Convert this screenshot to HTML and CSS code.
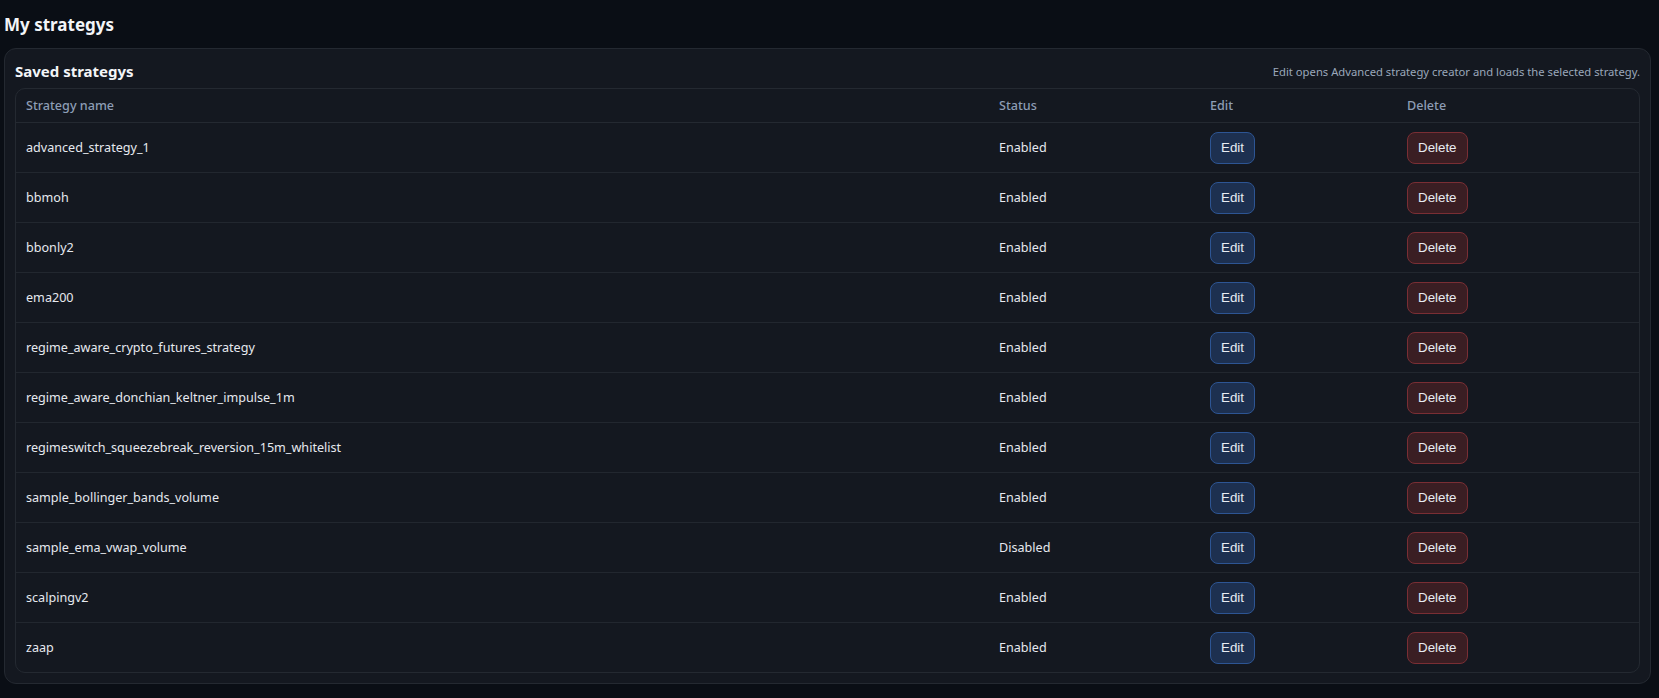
FILE: index.html
```html
<!DOCTYPE html>
<html lang="en">
<head>
<meta charset="utf-8">
<title>My strategys</title>
<link rel="stylesheet" href="styles.css">
</head>
<body>
<h1 class="page-title">My strategys</h1>
<section class="card">
  <div class="card-head">
    <h2 class="card-title">Saved strategys</h2>
    <span class="hint">Edit opens Advanced strategy creator and loads the selected strategy.</span>
  </div>
  <div class="table-wrap">
    <table class="strat-table">
      <colgroup>
        <col class="c-name"><col class="c-status"><col class="c-edit"><col class="c-del">
      </colgroup>
      <thead>
        <tr><th>Strategy name</th><th>Status</th><th>Edit</th><th>Delete</th></tr>
      </thead>
      <tbody>
        <tr><td>advanced_strategy_1</td><td>Enabled</td><td><button class="btn btn-edit">Edit</button></td><td><button class="btn btn-del">Delete</button></td></tr>
        <tr><td>bbmoh</td><td>Enabled</td><td><button class="btn btn-edit">Edit</button></td><td><button class="btn btn-del">Delete</button></td></tr>
        <tr><td>bbonly2</td><td>Enabled</td><td><button class="btn btn-edit">Edit</button></td><td><button class="btn btn-del">Delete</button></td></tr>
        <tr><td>ema200</td><td>Enabled</td><td><button class="btn btn-edit">Edit</button></td><td><button class="btn btn-del">Delete</button></td></tr>
        <tr><td>regime_aware_crypto_futures_strategy</td><td>Enabled</td><td><button class="btn btn-edit">Edit</button></td><td><button class="btn btn-del">Delete</button></td></tr>
        <tr><td>regime_aware_donchian_keltner_impulse_1m</td><td>Enabled</td><td><button class="btn btn-edit">Edit</button></td><td><button class="btn btn-del">Delete</button></td></tr>
        <tr><td>regimeswitch_squeezebreak_reversion_15m_whitelist</td><td>Enabled</td><td><button class="btn btn-edit">Edit</button></td><td><button class="btn btn-del">Delete</button></td></tr>
        <tr><td>sample_bollinger_bands_volume</td><td>Enabled</td><td><button class="btn btn-edit">Edit</button></td><td><button class="btn btn-del">Delete</button></td></tr>
        <tr><td>sample_ema_vwap_volume</td><td>Disabled</td><td><button class="btn btn-edit">Edit</button></td><td><button class="btn btn-del">Delete</button></td></tr>
        <tr><td>scalpingv2</td><td>Enabled</td><td><button class="btn btn-edit">Edit</button></td><td><button class="btn btn-del">Delete</button></td></tr>
        <tr><td>zaap</td><td>Enabled</td><td><button class="btn btn-edit">Edit</button></td><td><button class="btn btn-del">Delete</button></td></tr>
      </tbody>
    </table>
  </div>
</section>
</body>
</html>
```
FILE: styles.css
```css
* { box-sizing: border-box; }
html, body { background: #0a0e15; }
body {
  margin: 0;
  padding: 0 8px 0 4px;
  font-family: "Noto Sans", "Open Sans", sans-serif;
  color: #e6e9ef;
}
.page-title {
  margin: 0;
  padding: 13px 0 11px 0;
  font-size: 17px;
  line-height: 24px;
  font-weight: 700;
  color: #f3f5f8;
}
.card {
  background: #141820;
  border: 1px solid #242931;
  border-radius: 12px;
  padding: 10px;
}
.card-head {
  display: flex;
  justify-content: space-between;
  align-items: center;
  height: 24px;
  margin-bottom: 5px;
}
.card-title {
  margin: 0;
  font-size: 15px;
  line-height: 24px;
  font-weight: 700;
  color: #f3f5f8;
}
.hint {
  font-size: 11.25px;
  color: #9aa7ba;
}
.table-wrap {
  border: 1px solid #242931;
  border-radius: 10px;
  overflow: hidden;
}
.strat-table {
  width: 100%;
  border-collapse: collapse;
  table-layout: fixed;
  font-size: 12.6px;
}
.c-name { width: 973px; }
.c-status { width: 211px; }
.c-edit { width: 197px; }
.c-del { width: auto; }
.strat-table th {
  text-align: left;
  font-weight: 500;
  color: #8d9db5;
  height: 33px;
  padding: 0 10px;
  border-bottom: 1px solid #242931;
}
.strat-table td {
  height: 50px;
  padding: 1px 10px 0 10px;
  border-bottom: 1px solid #22272f;
  vertical-align: middle;
}
.strat-table tbody tr:last-child td { border-bottom: none; }
.btn {
  font-family: "Liberation Sans", Arial, sans-serif;
  font-size: 13.33px;
  height: 32px;
  padding: 0 10px;
  border-radius: 8px;
  color: #e8ecf2;
  cursor: pointer;
}
.btn-edit {
  background: #1d3050;
  border: 1px solid #2d5594;
}
.btn-del {
  background: #3a1e23;
  border: 1px solid #7a2e34;
}
```
